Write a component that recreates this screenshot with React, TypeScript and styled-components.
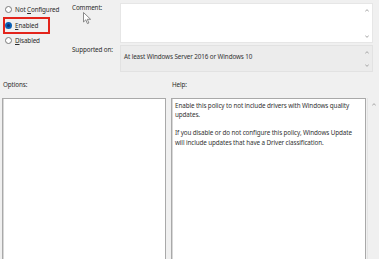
import styled, { createGlobalStyle } from "styled-components";

const GlobalStyle = createGlobalStyle`
  html, body {
    margin: 0;
    padding: 0;
    background: #f0f0f0;
    overflow: hidden;
  }
  body {
    font-family: "Noto Sans", "Open Sans", sans-serif;
    font-size: 6.3px;
    letter-spacing: -0.1px;
    color: #2b2b2b;
  }
`;

const Window = styled.div`
  width: 379px;
  height: 259px;
  display: flex;
  flex-direction: column;
  overflow: hidden;
`;

const Top = styled.div`
  flex: none;
  display: grid;
  grid-template-columns: 70px 50px 253px;
  grid-template-rows: 40px 27px;
  row-gap: 2px;
  padding-top: 3px;
`;

const RadioGroup = styled.div`
  grid-row: 1 / span 2;
  display: flex;
  flex-direction: column;
  padding-left: 3px;
`;

const RadioRow = styled.div<{ $marked?: boolean }>`
  box-sizing: border-box;
  display: flex;
  align-items: center;
  gap: 3px;
  height: ${(p) => (p.$marked ? "17px" : "12px")};
  width: 47px;
  white-space: nowrap;
  padding-left: ${(p) => (p.$marked ? "0" : "2px")};
  margin-top: ${(p) => (p.$marked ? "2px" : "0")};
  border: ${(p) => (p.$marked ? "2px solid #e3241b" : "none")};
`;

const Dot = styled.span<{ $on?: boolean }>`
  box-sizing: border-box;
  width: 7px;
  height: 7px;
  border-radius: 50%;
  border: ${(p) => (p.$on ? "2px solid #0a5fb4" : "1px solid #7a7a7a")};
  background: ${(p) => (p.$on ? "#0f2f6e" : "#fff")};
  flex: none;
`;

const FieldLabel = styled.div`
  padding-left: 2px;
  position: relative;
`;

const Box = styled.div<{ $grey?: boolean }>`
  position: relative;
  box-sizing: border-box;
  background: ${(p) => (p.$grey ? "#ececec" : "#ffffff")};
  border: 1px solid ${(p) => (p.$grey ? "#e2e2e2" : "#e6e6e6")};
  padding: 6px 14px 0 3px;
  color: #333;
`;

const Arrow = styled.svg<{ $bottom?: boolean }>`
  position: absolute;
  right: 3px;
  ${(p) => (p.$bottom ? "bottom: 4px;" : "top: 5px;")}
  width: 4px;
  height: 3px;
`;

const Cursor = styled.svg`
  position: absolute;
  left: 13px;
  top: 9px;
  width: 9px;
  height: 13px;
`;

const Headings = styled.div`
  flex: none;
  display: grid;
  grid-template-columns: 169px 1fr;
  padding: 8px 0 0 3px;
  height: 18px;
`;

const Panels = styled.div`
  display: grid;
  grid-template-columns: 164px 195px 1fr;
  column-gap: 5px;
  padding-left: 2px;
  flex: 1;
  min-height: 0;
`;

const Pane = styled.div`
  position: relative;
  box-sizing: border-box;
  background: #fff;
  border: 1px solid #a9a9a9;
  box-shadow: inset 1px 0 0 #d8d8d8;
  height: 200px;
`;

const HelpText = styled.div`
  padding: 2px 3px;
  line-height: 9.2px;
  color: #333;
  p {
    margin: 0 0 9px;
  }
`;

const Gutter = styled.div`
  position: relative;
  margin-left: -4px;
  border-left: 1px solid #e4e4e4;
`;

const Chevron = ({ down, ...rest }: { down?: boolean; $bottom?: boolean }) => (
  <Arrow viewBox="0 0 4 3" {...rest}>
    <path
      d={down ? "M0.3 0.5 L2 2.4 L3.7 0.5" : "M0.3 2.5 L2 0.6 L3.7 2.5"}
      fill="none"
      stroke="#a8a8a8"
      strokeWidth="1"
    />
  </Arrow>
);

const Radio = ({
  label,
  hot,
  on,
}: {
  label: string;
  hot: number;
  on?: boolean;
}) => (
  <RadioRow $marked={on}>
    <Dot $on={on} />
    <span>
      {label.slice(0, hot)}
      <u>{label[hot]}</u>
      {label.slice(hot + 1)}
    </span>
  </RadioRow>
);

const App = () => (
  <Window>
    <GlobalStyle />
    <Top>
      <RadioGroup>
        <Radio label="Not Configured" hot={4} />
        <Radio label="Enabled" hot={0} on />
        <Radio label="Disabled" hot={0} />
      </RadioGroup>
      <FieldLabel>
        Comment:
        <Cursor viewBox="0 0 9 13">
          <path
            d="M0.5 0.5 L0.5 10 L2.8 7.8 L4.4 11.6 L5.9 11 L4.3 7.3 L7.6 7.3 Z"
            fill="#fff"
            stroke="#6e6e6e"
            strokeWidth="0.8"
          />
        </Cursor>
      </FieldLabel>
      <Box>
        <Chevron />
        <Chevron down $bottom />
      </Box>
      <FieldLabel>Supported on:</FieldLabel>
      <Box $grey>
        At least Windows Server 2016 or Windows 10
        <Chevron />
        <Chevron down $bottom />
      </Box>
    </Top>
    <Headings>
      <span>Options:</span>
      <span>Help:</span>
    </Headings>
    <Panels>
      <Pane />
      <Pane>
        <HelpText>
          <p>
            Enable this policy to not include drivers with Windows quality
            updates.
          </p>
          <p>
            If you disable or do not configure this policy, Windows Update
            will include updates that have a Driver classification.
          </p>
        </HelpText>
      </Pane>
      <Gutter>
        <Chevron />
      </Gutter>
    </Panels>
  </Window>
);

export default App;
